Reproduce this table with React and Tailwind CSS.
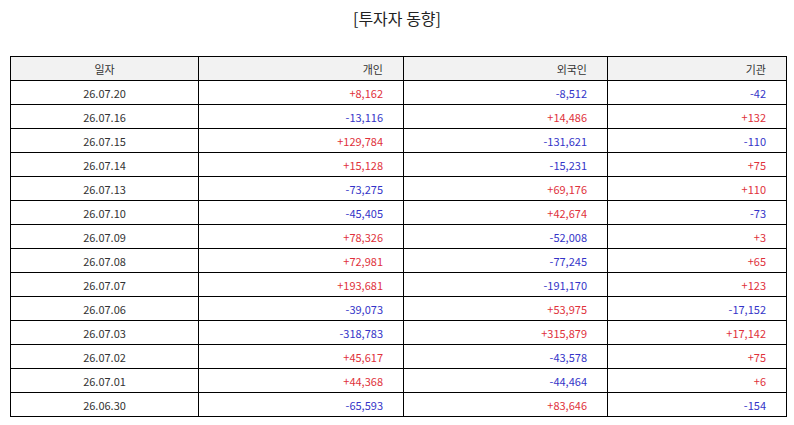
import React from "react";

const rows = [
  ["26.07.20", "+8,162", "-8,512", "-42"],
  ["26.07.16", "-13,116", "+14,486", "+132"],
  ["26.07.15", "+129,784", "-131,621", "-110"],
  ["26.07.14", "+15,128", "-15,231", "+75"],
  ["26.07.13", "-73,275", "+69,176", "+110"],
  ["26.07.10", "-45,405", "+42,674", "-73"],
  ["26.07.09", "+78,326", "-52,008", "+3"],
  ["26.07.08", "+72,981", "-77,245", "+65"],
  ["26.07.07", "+193,681", "-191,170", "+123"],
  ["26.07.06", "-39,073", "+53,975", "-17,152"],
  ["26.07.03", "-318,783", "+315,879", "+17,142"],
  ["26.07.02", "+45,617", "-43,578", "+75"],
  ["26.07.01", "+44,368", "-44,464", "+6"],
  ["26.06.30", "-65,593", "+83,646", "-154"],
];

function Num({ v }) {
  const pos = v.startsWith("+");
  return (
    <td
      className={
        "border border-black text-right pr-[20px] h-[24px] " +
        (pos ? "text-[#e0313b]" : "text-[#3434c8]")
      }
    >
      {v}
    </td>
  );
}

export default function App() {
  return (
    <div
      className="w-[794px] h-[425px] bg-white text-[#333]"
      style={{ fontFamily: '"Noto Sans CJK KR", "Noto Sans", sans-serif' }}
    >
      <div className="h-[56px] pt-[5px] text-center text-[16px] leading-[26px] text-[#222]">
        [투자자 동향]
      </div>
      <table className="ml-[10px] w-[776px] border-collapse text-[11px] leading-[14px] table-fixed">
        <colgroup>
          <col className="w-[188px]" />
          <col className="w-[205px]" />
          <col className="w-[204px]" />
          <col className="w-[179px]" />
        </colgroup>
        <thead>
          <tr className="bg-[#f2f2f2]">
            <th className="border border-black font-normal text-center h-[24px]">일자</th>
            <th className="border border-black font-normal text-right pr-[20px] h-[24px]">개인</th>
            <th className="border border-black font-normal text-right pr-[20px] h-[24px]">외국인</th>
            <th className="border border-black font-normal text-right pr-[20px] h-[24px]">기관</th>
          </tr>
        </thead>
        <tbody>
          {rows.map((r) => (
            <tr key={r[0]}>
              <td className="border border-black text-center h-[24px]">{r[0]}</td>
              <Num v={r[1]} />
              <Num v={r[2]} />
              <Num v={r[3]} />
            </tr>
          ))}
        </tbody>
      </table>
    </div>
  );
}
